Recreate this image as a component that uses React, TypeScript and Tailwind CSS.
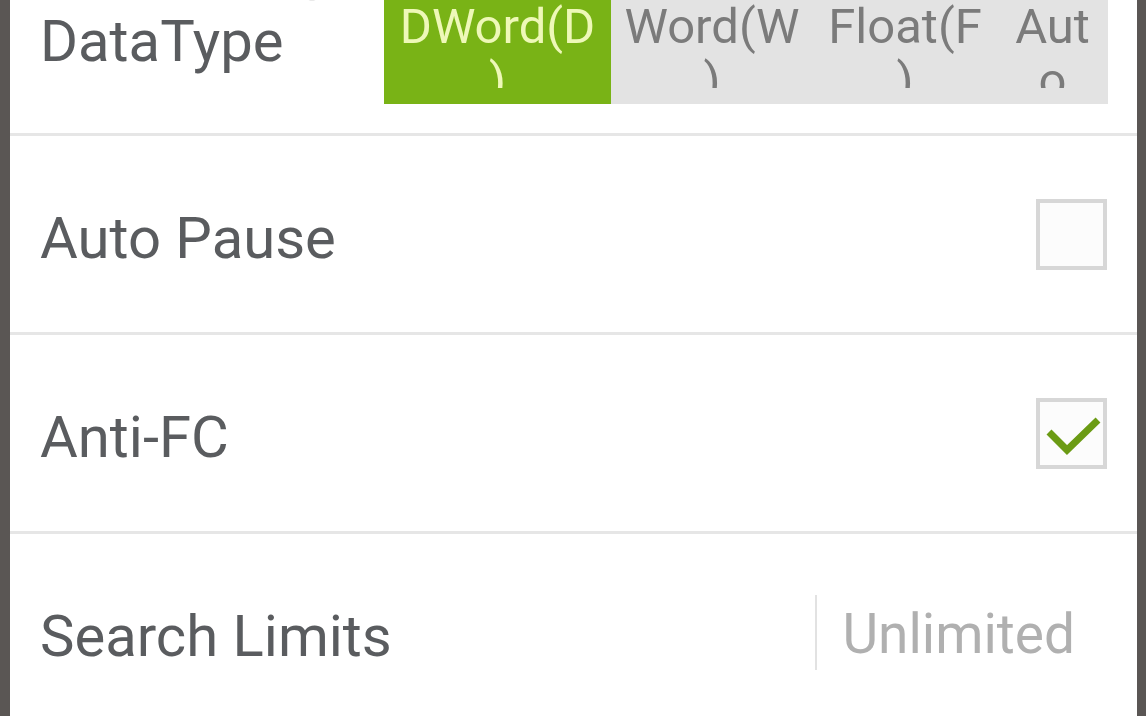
import React from 'react';

const font = { fontFamily: 'Roboto, "Noto Sans", sans-serif' };

const Segment: React.FC<{ lines: string[]; width: string; active?: boolean }> = ({ lines, width, active }) => (
  <div className={`${width} h-full ${active ? 'bg-[#79b316] text-[#eef8b8]' : 'text-[#7b7b7b]'}`}>
    <div className="h-[122px] overflow-hidden">
      <div className="pt-[34px] text-[49px] leading-[54px] text-center whitespace-nowrap">
        {lines.map((l, i) => (
          <div key={i}>{l}</div>
        ))}
      </div>
    </div>
  </div>
);

const Row: React.FC<{ children: React.ReactNode; className?: string }> = ({ children, className = '' }) => (
  <div className={`relative flex items-center h-[199px] pl-[30px] pr-[30px] border-b-[3px] border-[#e6e6e6] shrink-0 ${className}`}>
    {children}
  </div>
);

const Label: React.FC<{ text: string; className?: string }> = ({ text, className = 'pt-[7px]' }) => (
  <span className={`text-[58px] leading-none text-[#5a5c5f] ${className}`}>{text}</span>
);

const CheckBox: React.FC<{ checked?: boolean }> = ({ checked }) => (
  <div className="ml-auto w-[71px] h-[71px] border-[4px] border-[#d7d7d7] bg-[#fcfcfc] flex items-center justify-center">
    {checked && (
      <svg width="60" height="60" viewBox="0 0 60 60">
        <path d="M7 29 L25 47 L56 17" fill="none" stroke="#6b9b14" strokeWidth="7" />
      </svg>
    )}
  </div>
);

export default function App() {
  return (
    <div className="w-[1146px] h-[716px] bg-[#5a5654] flex overflow-hidden" style={font}>
      <div className="ml-[10px] w-[1127px] h-full bg-white flex flex-col overflow-hidden">
        <Row className="-mt-[63px]">
          <Label text="DataType" className="pt-[11px]" />
          <svg className="absolute left-[280px] top-[44px]" width="40" height="28" viewBox="0 0 40 28">
            <circle cx="22" cy="8" r="9" fill="none" stroke="#d4d4d4" strokeWidth="5" />
          </svg>
          <div className="ml-auto mr-[-1px] h-[138px] w-[724px] bg-[#e3e3e3] flex">
            <Segment lines={['DWord(D', ')']} width="w-[227px]" active />
            <Segment lines={['Word(W', ')']} width="w-[202px]" />
            <Segment lines={['Float(F', ')']} width="w-[184px]" />
            <Segment lines={['Aut', 'o']} width="w-[111px]" />
          </div>
        </Row>
        <Row>
          <Label text="Auto Pause" />
          <CheckBox />
        </Row>
        <Row>
          <Label text="Anti-FC" />
          <CheckBox checked />
        </Row>
        <Row className="border-b-0">
          <Label text="Search Limits" />
          <div className="ml-auto flex items-center h-[75px]">
            <div className="w-[2px] h-full bg-[#e2e2e2]" />
            <span className="ml-[25px] mr-[32px] pt-[4px] text-[55px] leading-none text-[#b0b0b0]">Unlimited</span>
          </div>
        </Row>
      </div>
    </div>
  );
}
